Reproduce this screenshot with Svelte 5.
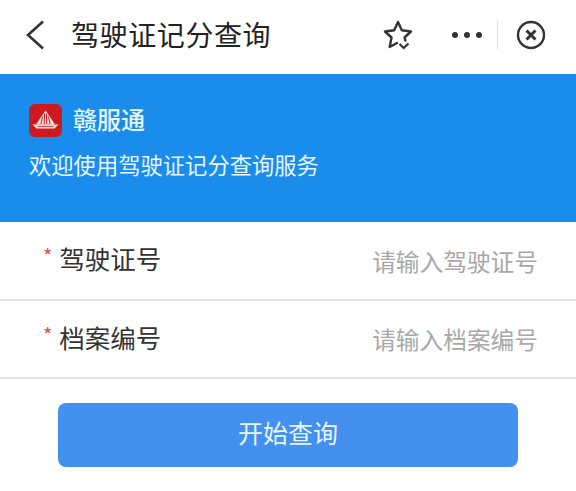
<script>
  const fields = [
    { label: "驾驶证号", hint: "请输入驾驶证号" },
    { label: "档案编号", hint: "请输入档案编号" },
  ];
</script>

<div class="page">
  <header class="nav">
    <svg class="back" width="22" height="30" viewBox="0 0 22 30">
      <path d="M19 1.5 L4 15 L19 28.5" fill="none" stroke="#333" stroke-width="2.6" />
    </svg>
    <h1>驾驶证记分查询</h1>
    <svg class="star" width="30" height="30" viewBox="0 0 30 30">
      <path d="M22.4 20.5 L21.5 17.5 L28 11.5 L18.8 10.3 L15 2 L11.2 10.3 L2 11.5 L8.5 17.5 L6.7 27 L14 23" fill="none" stroke="#333" stroke-width="2.4" stroke-linejoin="round" stroke-linecap="round" />
      <path d="M16.5 24 L20.7 28 L25.5 23.5" fill="none" stroke="#333" stroke-width="2.2" />
    </svg>
    <div class="dots"><i></i><i></i><i></i></div>
    <span class="sep"></span>
    <svg class="close" width="30" height="30" viewBox="0 0 30 30">
      <circle cx="15" cy="15" r="13" fill="none" stroke="#333" stroke-width="2.4" />
      <path d="M10.5 10.5 L19.5 19.5 M19.5 10.5 L10.5 19.5" stroke="#333" stroke-width="3" />
    </svg>
  </header>

  <section class="banner">
    <div class="brand">
      <svg class="logo" width="33" height="33" viewBox="0 0 33 33">
        <rect width="33" height="33" rx="6" fill="#cc1a20" />
        <path d="M7 20.5 L12 13 L16.5 6.5 L21 13 L26 20.5 Z" fill="#f9e3df" />
        <path d="M12 20 L13.5 12.5 M15.2 20 L15.6 9.5 M17.8 20 L17.4 9.5 M21 20 L19.5 12.5" stroke="#cc1a20" stroke-width="1" />
        <path d="M3.5 20.5 H29.5 L25.5 24.5 H7.5 Z" fill="#f9e3df" />
        <path d="M8.5 22.5 H24.5" stroke="#cc1a20" stroke-width="0.8" />
      </svg>
      <span>赣服通</span>
    </div>
    <p>欢迎使用驾驶证记分查询服务</p>
  </section>

  {#each fields as f}
    <div class="row">
      <label><em>*</em>{f.label}</label>
      <span class="hint">{f.hint}</span>
    </div>
  {/each}

  <div class="action">
    <button>开始查询</button>
  </div>
</div>

<style>
  :global(body) {
    margin: 0;
    background: #fff;
  }

  .page {
    width: 576px;
    height: 491px;
    overflow: hidden;
    font-family: "Noto Sans CJK SC", "Noto Sans", sans-serif;
  }

  .nav {
    height: 74px;
    display: flex;
    align-items: center;
    padding: 0 0 5px 24px;
    box-sizing: border-box;
  }
  .back {
    flex: none;
  }
  .nav h1 {
    margin: 0 0 2px 25px;
    font-size: 28px;
    font-weight: 400;
    letter-spacing: 0.6px;
    color: #222;
    flex: 1;
  }
  .star {
    margin-right: 39px;
  }
  .dots {
    display: flex;
    gap: 6px;
  }
  .dots i {
    width: 6px;
    height: 6px;
    border-radius: 50%;
    background: #333;
  }
  .sep {
    width: 1px;
    height: 28px;
    background: #ddd;
    margin: 0 18px 0 15px;
  }
  .close {
    margin-right: 30px;
  }

  .banner {
    height: 148px;
    box-sizing: border-box;
    background: #1a8ceb;
    padding: 30px 29px 0;
    color: #e6f6ff;
  }
  .brand {
    display: flex;
    align-items: center;
    gap: 11px;
    font-size: 24px;
    font-weight: 500;
    height: 33px;
  }
  .brand span {
    padding-bottom: 4px;
  }
  .banner p {
    margin: 11px 0 0;
    font-size: 22.3px;
    line-height: 32px;
  }

  .row {
    height: 78.5px;
    box-sizing: border-box;
    border-bottom: 2px solid #e2e2e2;
    display: flex;
    align-items: center;
    justify-content: space-between;
    padding: 0 38px 2px 43px;
  }
  .row label {
    font-size: 25.5px;
    color: #333;
    padding-bottom: 3px;
  }
  .row em {
    font-style: normal;
    color: #d9534f;
    font-size: 20px;
    margin-right: 7px;
    vertical-align: 5px;
  }
  .hint {
    font-size: 23.7px;
    color: #a8a8a8;
    padding-top: 3px;
  }

  .action {
    padding: 24px 58px 0;
  }
  button {
    display: block;
    width: 100%;
    height: 64px;
    border: none;
    border-radius: 8px;
    background: #4390ee;
    color: #e8f5ff;
    font-family: inherit;
    font-size: 25px;
    padding: 0 0 6px;
  }
</style>
